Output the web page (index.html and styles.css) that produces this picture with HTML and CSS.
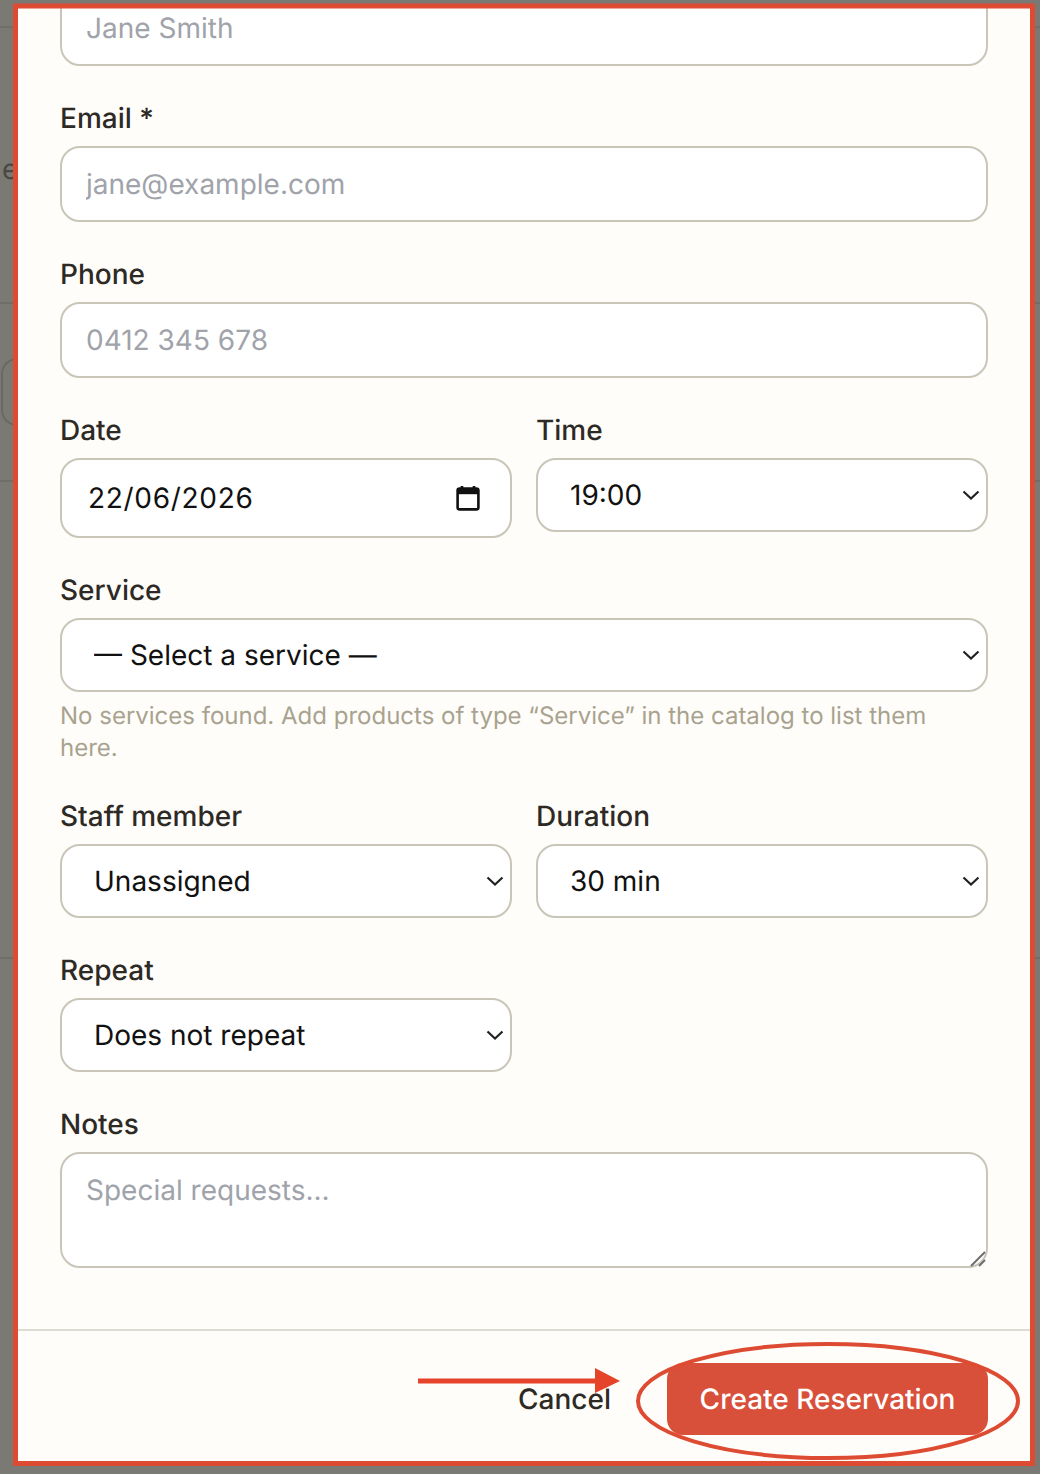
FILE: index.html
```html
<!DOCTYPE html>
<html>
<head>
    <title>New Reservation</title>
    <link rel="stylesheet" href="styles.css">
</head>
<body>
    <!-- page dimmed behind the dialog -->
    <div class="backdrop">
        <div class="bgLine bgLine1"></div>
        <span class="bgLetter">e</span>
        <div class="bgLine bgLine2"></div>
        <div class="bgInput"></div>
        <div class="bgLine bgLine3"></div>
        <div class="bgLine bgLine4"></div>
    </div>

    <div class="modal">
        <form class="modalBody">
            <div class="field">
                <input class="textInput" type="text" placeholder="Jane Smith">
            </div>

            <div class="field">
                <label for="email">Email *</label>
                <input class="textInput" type="email" id="email" placeholder="jane@example.com">
            </div>

            <div class="field">
                <label for="phone">Phone</label>
                <input class="textInput" type="text" id="phone" placeholder="0412 345 678">
            </div>

            <div class="fieldRow">
                <div class="field">
                    <label for="date">Date</label>
                    <div class="dateWrap">
                        <input class="textInput dateInput" type="text" id="date" value="22/06/2026">
                        <svg class="calendarIcon" width="24" height="26" viewBox="0 0 24 26">
                            <path d="M6 1v4M18 1v4" stroke="#111" stroke-width="2.6" fill="none"/>
                            <rect x="1.6" y="3.6" width="20.8" height="20.8" rx="2" fill="none" stroke="#111" stroke-width="2.6"/>
                            <rect x="1.6" y="3.6" width="20.8" height="5.6" fill="#111"/>
                        </svg>
                    </div>
                </div>
                <div class="field">
                    <label for="time">Time</label>
                    <div class="selectWrap">
                        <select id="time"><option>19:00</option></select>
                        <svg class="chevron" width="18" height="10" viewBox="0 0 18 10"><path d="M1.5 1.5L9 8.5l7.5-7" fill="none" stroke="#222" stroke-width="2.2"/></svg>
                    </div>
                </div>
            </div>

            <div class="field">
                <label for="service">Service</label>
                <div class="selectWrap">
                    <select id="service"><option>— Select a service —</option></select>
                    <svg class="chevron" width="18" height="10" viewBox="0 0 18 10"><path d="M1.5 1.5L9 8.5l7.5-7" fill="none" stroke="#222" stroke-width="2.2"/></svg>
                </div>
                <p class="helpText">No services found. Add products of type “Service” in the catalog to list them here.</p>
            </div>

            <div class="fieldRow">
                <div class="field">
                    <label for="staff">Staff member</label>
                    <div class="selectWrap">
                        <select id="staff"><option>Unassigned</option></select>
                        <svg class="chevron" width="18" height="10" viewBox="0 0 18 10"><path d="M1.5 1.5L9 8.5l7.5-7" fill="none" stroke="#222" stroke-width="2.2"/></svg>
                    </div>
                </div>
                <div class="field">
                    <label for="duration">Duration</label>
                    <div class="selectWrap">
                        <select id="duration"><option>30 min</option></select>
                        <svg class="chevron" width="18" height="10" viewBox="0 0 18 10"><path d="M1.5 1.5L9 8.5l7.5-7" fill="none" stroke="#222" stroke-width="2.2"/></svg>
                    </div>
                </div>
            </div>

            <div class="fieldRow">
                <div class="field">
                    <label for="repeat">Repeat</label>
                    <div class="selectWrap">
                        <select id="repeat"><option>Does not repeat</option></select>
                        <svg class="chevron" width="18" height="10" viewBox="0 0 18 10"><path d="M1.5 1.5L9 8.5l7.5-7" fill="none" stroke="#222" stroke-width="2.2"/></svg>
                    </div>
                </div>
            </div>

            <div class="field">
                <label for="notes">Notes</label>
                <div class="notesWrap">
                    <textarea class="textInput notesInput" id="notes" placeholder="Special requests..."></textarea>
                    <svg class="resizeGrip" width="18" height="18" viewBox="0 0 18 18"><path d="M2 17L16 3M10 17l6-6" stroke="#6f6f6f" stroke-width="2" fill="none"/></svg>
                </div>
            </div>
        </form>

        <div class="modalFooter">
            <button type="button" class="cancelBtn">Cancel</button>
            <button type="button" class="createBtn">Create Reservation</button>
        </div>
    </div>

    <!-- red annotation drawn on top of the screenshot -->
    <svg class="annotation" width="1040" height="1474" viewBox="0 0 1040 1474">
        <rect x="15.5" y="6" width="1017" height="1457.5" fill="none" stroke="#dd4b32" stroke-width="5"/>
        <ellipse cx="828" cy="1401" rx="190" ry="57" fill="none" stroke="#dd4b32" stroke-width="4"/>
        <path d="M418 1381H600" stroke="#e5432a" stroke-width="5"/>
        <path d="M595 1368L620 1381L595 1393Z" fill="#e5432a"/>
    </svg>
</body>
</html>
```

FILE: styles.css
```css
* {
    box-sizing: border-box;
    font-variation-settings: 'opsz' 14;
    text-rendering: geometricPrecision;
}

body {
    margin: 0;
    width: 1040px;
    height: 1474px;
    overflow: hidden;
    position: relative;
    font-family: 'Inter', sans-serif;
    background-color: #7b7974;
}

.backdrop {
    position: absolute;
    inset: 0;
}

.bgLine {
    position: absolute;
    left: 0;
    right: 0;
    height: 2px;
    background-color: #706e69;
}

.bgLine1 { top: 26px; }
.bgLine2 { top: 302px; }
.bgLine3 { top: 480px; }
.bgLine4 { top: 957px; }

.bgLetter {
    position: absolute;
    left: 2px;
    top: 152px;
    font-size: 28px;
    color: #4a4845;
}

.bgInput {
    position: absolute;
    left: 1px;
    top: 358px;
    width: 40px;
    height: 68px;
    border: 2px solid #6a6864;
    border-radius: 16px;
}

.modal {
    position: absolute;
    left: 16px;
    top: 6px;
    width: 1016px;
    height: 1458px;
    background-color: #fffdf9;
    border-radius: 8px;
    display: flex;
    flex-direction: column;
    overflow: hidden;
}

.modalBody {
    flex: 1;
    min-height: 0;
    padding: 0 44px;
    margin-top: -16px;
    display: flex;
    flex-direction: column;
    gap: 32px;
}

.field {
    display: flex;
    flex-direction: column;
    min-width: 0;
}

.fieldRow {
    display: grid;
    grid-template-columns: 1fr 1fr;
    gap: 24px;
    align-items: start;
}

label {
    font-size: 28px;
    line-height: 40px;
    font-weight: 500;
    color: #2d2a26;
    margin-bottom: 8px;
}

.textInput {
    width: 100%;
    height: 76px;
    padding: 0 24px;
    border: 2px solid #c9c5b8;
    border-radius: 20px;
    background-color: #fff;
    font-family: 'Inter', sans-serif;
    font-size: 28px;
    color: #111;
    outline: none;
}

.textInput::placeholder {
    color: #a0a3aa;
}

.dateWrap,
.selectWrap,
.notesWrap {
    position: relative;
}

.dateInput {
    height: 80px;
    padding-left: 26px;
    letter-spacing: 0.7px;
}

.calendarIcon {
    position: absolute;
    right: 32px;
    top: 27px;
}

select {
    width: 100%;
    height: 74px;
    padding: 0 32px;
    border: 2px solid #c9c5b8;
    border-radius: 20px;
    background-color: #fff;
    font-family: 'Inter', sans-serif;
    font-size: 28px;
    color: #111;
    appearance: none;
}

.chevron {
    position: absolute;
    right: 8px;
    top: 32px;
}

.helpText {
    margin: 8px 0 0;
    font-size: 24px;
    line-height: 32px;
    color: #a8a28f;
}

.notesInput {
    display: block;
    height: 116px;
    padding-top: 19px;
    resize: none;
}

.resizeGrip {
    position: absolute;
    right: 1px;
    bottom: 1px;
}

.modalFooter {
    display: flex;
    justify-content: flex-end;
    align-items: center;
    gap: 56px;
    padding: 32px 44px 29px;
    border-top: 2px solid #dedbd0;
}

.cancelBtn {
    background: none;
    border: none;
    padding: 0;
    font-family: 'Inter', sans-serif;
    font-size: 28px;
    font-weight: 500;
    color: #2d2a26;
}

.createBtn {
    width: 321px;
    height: 72px;
    border: none;
    border-radius: 16px;
    background-color: #d9503a;
    color: #fff;
    font-family: 'Inter', sans-serif;
    font-size: 28px;
    font-weight: 500;
}

.annotation {
    position: absolute;
    left: 0;
    top: 0;
    pointer-events: none;
}
```
